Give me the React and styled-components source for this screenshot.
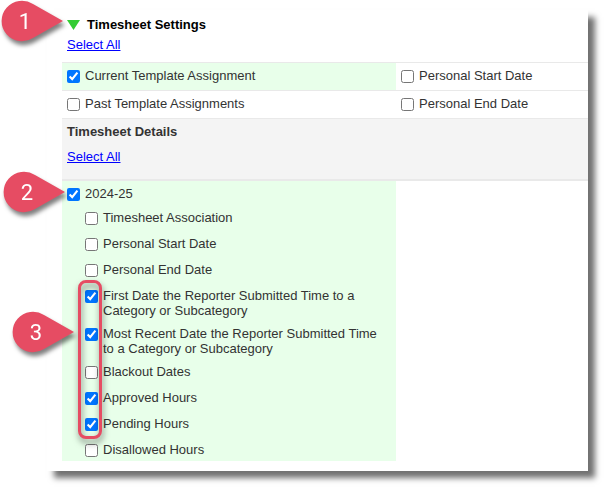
import React, { useState } from 'react';
import styled, { createGlobalStyle } from 'styled-components';

const GlobalStyle = createGlobalStyle`
    *, *::before, *::after {
        box-sizing: border-box;
    }
    body {
        margin: 0;
        background: #ffffff;
        color: #333333;
        font-family: "Liberation Sans", Arial, Helvetica, sans-serif;
        font-size: 13px;
        line-height: 15px;
    }
`;

const Page = styled.main`
    padding: 10px 23px 23px 47px;
`;

const Panel = styled.div`
    padding: 7px 0 10px 15px;
    background: #ffffff;
    box-shadow: 7px 7px 6px rgba(0, 0, 0, 0.56);
`;

const SettingsHeader = styled.header`
    position: relative;
    padding: 0 5px 10px;
`;

const Title = styled.h2`
    display: flex;
    align-items: center;
    gap: 7px;
    margin: 0 0 4px;
    color: #000000;
    font-size: 13px;
    line-height: 16px;
`;

const Toggle = styled.button`
    display: flex;
    padding: 0;
    border: none;
    background: none;
    cursor: pointer;
`;

const SelectAll = styled.a`
    color: #0000ff;
`;

const SettingsGrid = styled.div`
    display: grid;
    grid-template-columns: 127fr 73fr;
`;

const Cell = styled.div`
    padding: 5px 5px 4px;
    border-top: 1px solid #e9e9e9;
    background: ${({ $on }) => ($on ? '#e8ffea' : '#ffffff')};
`;

const DetailsHeader = styled.header`
    padding: 5px 5px 15px;
    border-top: 1px solid #e9e9e9;
    border-bottom: 2px solid #e9e9e9;
    background: #f4f4f4;
`;

const DetailsTitle = styled.h3`
    margin: 0 0 10px;
    font-size: 13px;
    line-height: 15px;
`;

const Details = styled.div`
    padding: 5px 5px 1px;
    background: #e8ffea;
`;

const YearRow = styled.div`
    position: relative;
    margin-bottom: 6px;
`;

const Options = styled.div`
    display: flex;
    flex-direction: column;
    gap: 8px;
`;

const YearOptions = styled(Options)`
    padding-left: 18px;
`;

const MarkedOptions = styled(Options)`
    position: relative;
    &::before {
        content: '';
        position: absolute;
        top: -8px;
        bottom: -5px;
        left: -7px;
        width: 24px;
        border: 3px solid #e64c63;
        border-radius: 8px;
        filter: drop-shadow(1px 4px 3px rgba(0, 0, 0, 0.5));
        pointer-events: none;
    }
`;

const OptionLabel = styled.label`
    display: flex;
    align-items: flex-start;
    gap: 5px;
    min-height: 18px;
`;

const Checkbox = styled.input`
    flex: none;
    width: 13px;
    height: 13px;
    margin: 2px 0 0;
`;

const CalloutMark = styled.svg`
    position: absolute;
    top: ${({ $top }) => $top};
    left: ${({ $left }) => $left};
    width: 70px;
    height: 52px;
    overflow: visible;
    filter: drop-shadow(2px 4px 2px rgba(0, 0, 0, 0.5));
    pointer-events: none;
    text {
        fill: #ffffff;
        font-family: Roboto, "Liberation Sans", sans-serif;
        font-size: 22px;
        text-anchor: middle;
    }
`;

const Callout = ({ number, top, left }) => (
    <CalloutMark $top={top} $left={left} viewBox="0 0 70 52">
        <path fill="#e64c63" d="M62 20 L32 3 A20.3 20.3 0 1 0 32 37 Z" />
        <text x="24" y="28">{number}</text>
    </CalloutMark>
);

const Option = ({ name, checked, onChange }) => (
    <OptionLabel>
        <Checkbox type="checkbox" checked={checked} onChange={() => onChange(name)} />
        <span>{name}</span>
    </OptionLabel>
);

const settings = [
    { id: 'current', name: 'Current Template Assignment' },
    { id: 'start', name: 'Personal Start Date' },
    { id: 'past', name: 'Past Template Assignments' },
    { id: 'end', name: 'Personal End Date' },
];

const dateOptions = ['Timesheet Association', 'Personal Start Date', 'Personal End Date'];

const markedOptions = [
    'First Date the Reporter Submitted Time to a Category or Subcategory',
    'Most Recent Date the Reporter Submitted Time to a Category or Subcategory',
    'Blackout Dates',
    'Approved Hours',
    'Pending Hours',
];

const otherOptions = ['Disallowed Hours'];

const toggleIn = (list, name) =>
    list.includes(name) ? list.filter((item) => item !== name) : [...list, name];

export default function App() {
    const [open, setOpen] = useState(true);
    const [picked, setPicked] = useState(['Current Template Assignment']);
    const [details, setDetails] = useState([
        '2024-25',
        markedOptions[0],
        markedOptions[1],
        'Approved Hours',
        'Pending Hours',
    ]);

    const pickSetting = (name) => setPicked((list) => toggleIn(list, name));
    const pickDetail = (name) => setDetails((list) => toggleIn(list, name));

    const selectSettings = (e) => {
        e.preventDefault();
        setPicked(settings.map(({ name }) => name));
    };
    const selectDetails = (e) => {
        e.preventDefault();
        setDetails(['2024-25', ...dateOptions, ...markedOptions, ...otherOptions]);
    };

    const renderOption = (name) => (
        <Option key={name} name={name} checked={details.includes(name)} onChange={pickDetail} />
    );

    return (
        <>
            <GlobalStyle />
            <Page>
                <Panel>
                    <SettingsHeader>
                        <Callout number="1" top="-16px" left="-61px" />
                        <Title>
                            <Toggle aria-label="Timesheet Settings" aria-expanded={open} onClick={() => setOpen(!open)}>
                                <svg width="13" height="10" viewBox="0 0 13 10">
                                    <path fill="#33cc33" d="M0 0 H13 L6.5 10 Z" />
                                </svg>
                            </Toggle>
                            Timesheet Settings
                        </Title>
                        <SelectAll href="#settings" onClick={selectSettings}>Select All</SelectAll>
                    </SettingsHeader>
                    {open && (
                        <>
                            <SettingsGrid>
                                {settings.map(({ id, name }) => (
                                    <Cell key={id} $on={picked.includes(name)}>
                                        <Option name={name} checked={picked.includes(name)} onChange={pickSetting} />
                                    </Cell>
                                ))}
                            </SettingsGrid>
                            <DetailsHeader>
                                <DetailsTitle>Timesheet Details</DetailsTitle>
                                <SelectAll href="#details" onClick={selectDetails}>Select All</SelectAll>
                            </DetailsHeader>
                            <SettingsGrid>
                                <Details>
                                    <YearRow>
                                        <Callout number="2" top="-14px" left="-64px" />
                                        {renderOption('2024-25')}
                                    </YearRow>
                                    <YearOptions>
                                        {dateOptions.map(renderOption)}
                                        <MarkedOptions>
                                            <Callout number="3" top="24px" left="-73px" />
                                            {markedOptions.map(renderOption)}
                                        </MarkedOptions>
                                        {otherOptions.map(renderOption)}
                                    </YearOptions>
                                </Details>
                            </SettingsGrid>
                        </>
                    )}
                </Panel>
            </Page>
        </>
    );
}
